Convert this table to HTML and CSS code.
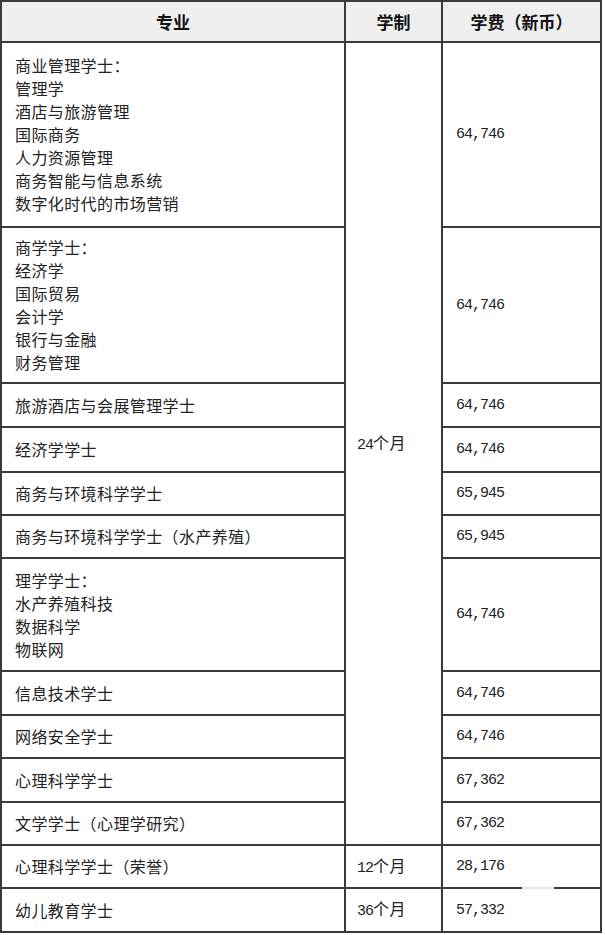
FILE: index.html
```html
<!DOCTYPE html>
<html lang="zh-CN">
<head>
<meta charset="utf-8">
<title>学费表</title>
<link rel="stylesheet" href="styles.css">
</head>
<body>
<div class="wrap">
  <div class="grid">
    <div class="cell head"><div>专业</div></div>
    <div class="cell head"><div>学制</div></div>
    <div class="cell head"><div>学费（新币）</div></div>

    <div class="cell major"><div>商业管理学士：<br>管理学<br>酒店与旅游管理<br>国际商务<br>人力资源管理<br>商务智能与信息系统<br>数字化时代的市场营销</div></div>
    <div class="cell dur span11"><div><span class="num">24</span>个月</div></div>
    <div class="cell fee"><div class="num">64,746</div></div>

    <div class="cell major"><div>商学学士：<br>经济学<br>国际贸易<br>会计学<br>银行与金融<br>财务管理</div></div>
    <div class="cell fee"><div class="num">64,746</div></div>

    <div class="cell major"><div>旅游酒店与会展管理学士</div></div>
    <div class="cell fee"><div class="num">64,746</div></div>

    <div class="cell major"><div>经济学学士</div></div>
    <div class="cell fee"><div class="num">64,746</div></div>

    <div class="cell major"><div>商务与环境科学学士</div></div>
    <div class="cell fee"><div class="num">65,945</div></div>

    <div class="cell major"><div>商务与环境科学学士（水产养殖）</div></div>
    <div class="cell fee"><div class="num">65,945</div></div>

    <div class="cell major"><div>理学学士：<br>水产养殖科技<br>数据科学<br>物联网</div></div>
    <div class="cell fee"><div class="num">64,746</div></div>

    <div class="cell major"><div>信息技术学士</div></div>
    <div class="cell fee"><div class="num">64,746</div></div>

    <div class="cell major"><div>网络安全学士</div></div>
    <div class="cell fee"><div class="num">64,746</div></div>

    <div class="cell major"><div>心理科学学士</div></div>
    <div class="cell fee"><div class="num">67,362</div></div>

    <div class="cell major"><div>文学学士（心理学研究）</div></div>
    <div class="cell fee"><div class="num">67,362</div></div>

    <div class="cell major"><div>心理科学学士（荣誉）</div></div>
    <div class="cell dur"><div><span class="num">12</span>个月</div></div>
    <div class="cell fee"><div class="num">28,176</div></div>

    <div class="cell major"><div>幼儿教育学士</div></div>
    <div class="cell dur"><div><span class="num">36</span>个月</div></div>
    <div class="cell fee"><div class="num">57,332</div></div>
  </div>
  <span class="blot"></span>
</div>
</body>
</html>
```
FILE: styles.css
```css
html, body {
  margin: 0;
  padding: 0;
  background: #ffffff;
}

.wrap {
  position: relative;
  width: 605px;
  height: 935px;
}

.grid {
  display: grid;
  width: 598px;
  grid-template-columns: 342px 95px 157px;
  grid-template-rows: 39px 183px 154px 42px 43px 41px 41px 111px 42px 41px 42px 41px 41px 42px;
  gap: 2px;
  padding: 2px;
  background: #3a3a3a;
  font-family: "Noto Sans CJK SC", "Liberation Sans", sans-serif;
  font-size: 16px;
  line-height: 23px;
  color: #222222;
}

.cell {
  background: #ffffff;
  display: flex;
  align-items: center;
  letter-spacing: 0.4px;
}

.head {
  background: #efefef;
  justify-content: center;
  font-weight: bold;
  font-size: 17px;
  color: #111111;
  letter-spacing: 0;
}

.major {
  padding-left: 13px;
}

.dur {
  padding-left: 11px;
}

.span11 {
  grid-row: span 11;
}

.fee {
  padding-left: 13px;
}

.num {
  font-family: "Liberation Mono", monospace;
  font-size: 15px;
  letter-spacing: -1px;
  color: #222222;
}

.blot {
  position: absolute;
  left: 522px;
  top: 887px;
  width: 32px;
  height: 2px;
  background: #e8e8e8;
}
```
